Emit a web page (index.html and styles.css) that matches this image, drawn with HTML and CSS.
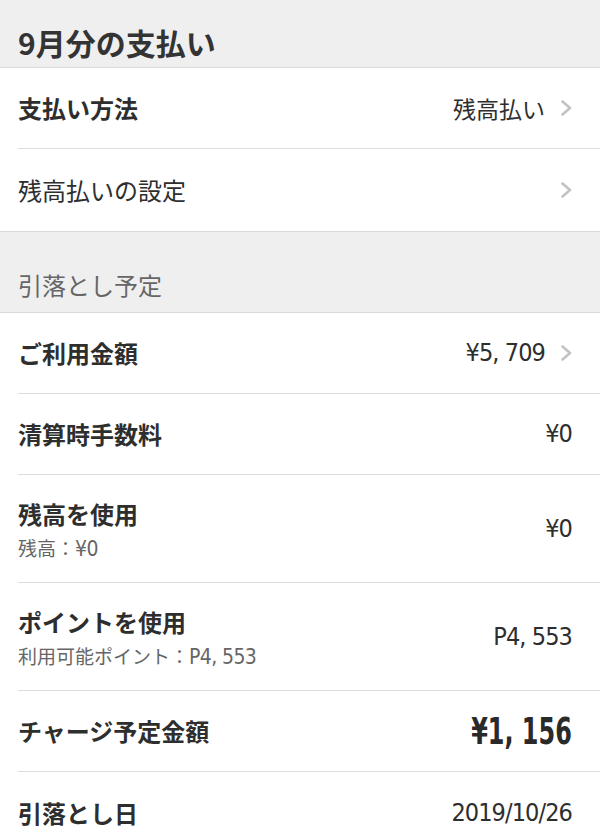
FILE: index.html
```html
<!DOCTYPE html>
<html lang="ja">
<head>
<meta charset="utf-8">
<link rel="stylesheet" href="styles.css">
</head>
<body>
<div class="page">
  <header class="title-bar"><h1 class="title">9月分の支払い</h1></header>
  <ul class="list">
    <li class="row">
      <span class="label bold">支払い方法</span>
      <span class="value">残高払い</span>
      <svg class="chev" viewBox="0 0 11 16"><path d="M1.5 1.5 L9 8 L1.5 14.5" /></svg>
    </li>
    <li class="row last">
      <span class="label">残高払いの設定</span>
      <span class="value"></span>
      <svg class="chev" viewBox="0 0 11 16"><path d="M1.5 1.5 L9 8 L1.5 14.5" /></svg>
    </li>
  </ul>
  <div class="section-head">引落とし予定</div>
  <ul class="list">
    <li class="row">
      <span class="label bold">ご利用金額</span>
      <span class="value num">¥5, 709</span>
      <svg class="chev" viewBox="0 0 11 16"><path d="M1.5 1.5 L9 8 L1.5 14.5" /></svg>
    </li>
    <li class="row">
      <span class="label bold">清算時手数料</span>
      <span class="value num">¥0</span>
    </li>
    <li class="row tall">
      <span class="stack">
        <span class="label bold">残高を使用</span>
        <span class="sub">残高：<span class="num">¥0</span></span>
      </span>
      <span class="value num">¥0</span>
    </li>
    <li class="row tall">
      <span class="stack">
        <span class="label bold">ポイントを使用</span>
        <span class="sub">利用可能ポイント：<span class="num">P4, 553</span></span>
      </span>
      <span class="value num">P4, 553</span>
    </li>
    <li class="row">
      <span class="label bold">チャージ予定金額</span>
      <span class="value num big">¥1, 156</span>
    </li>
    <li class="row last">
      <span class="label bold">引落とし日</span>
      <span class="value num">2019/10/26</span>
    </li>
  </ul>
</div>
</body>
</html>
```

FILE: styles.css
```css
* { box-sizing: border-box; }
html, body { margin: 0; padding: 0; background: #fff; }
body {
  font-family: "Noto Sans CJK JP", "Noto Sans", sans-serif;
  color: #2b2b2b;
  width: 600px;
  height: 838px;
  overflow: hidden;
}
.title-bar {
  background: #efefef;
  height: 68px;
  border-bottom: 1px solid #d9d9d9;
  padding: 21px 18px 0;
}
.title {
  margin: 0;
  font-size: 30px;
  line-height: 42px;
  font-weight: 700;
  color: #333;
}
.list { list-style: none; margin: 0; padding: 0; }
.row {
  display: flex;
  align-items: center;
  height: 81px;
  margin-left: 18px;
  padding-right: 28px;
  border-bottom: 1px solid #dddddd;
}
.row.tall { height: 108px; }
.row.last { border-bottom: none; height: 82px; }
.label {
  font-size: 24px;
  line-height: 34px;
  color: #2e2e2e;
}
.label.bold { font-weight: 700; }
.stack {
  display: flex;
  flex-direction: column;
  padding-top: 2px;
}
.sub {
  font-size: 19px;
  line-height: 28px;
  margin-top: 3px;
  color: #666;
}
.sub .num { font-size: 21px; letter-spacing: -0.6px; }
.value {
  margin-left: auto;
  font-size: 23px;
  line-height: 34px;
  color: #2e2e2e;
}
.num {
  font-family: "DejaVu Sans Condensed", "DejaVu Sans", sans-serif;
  font-stretch: condensed;
  font-size: 25px;
  letter-spacing: -0.9px;
}
.value.big {
  display: inline-block;
  font-size: 38px;
  font-weight: 700;
  line-height: 44px;
  letter-spacing: 0;
  color: #2a2a2a;
  transform: scaleX(0.7);
  transform-origin: right center;
}
.chev {
  width: 11px;
  height: 16px;
  margin-left: 16px;
  fill: none;
  stroke: #c3c3c3;
  stroke-width: 2.6;
  stroke-linecap: round;
  stroke-linejoin: round;
  flex: none;
}
.section-head {
  background: #efefef;
  height: 82px;
  border-top: 1px solid #d9d9d9;
  border-bottom: 1px solid #d9d9d9;
  padding: 35px 18px 0;
  font-size: 24px;
  line-height: 36px;
  color: #666;
}
```
